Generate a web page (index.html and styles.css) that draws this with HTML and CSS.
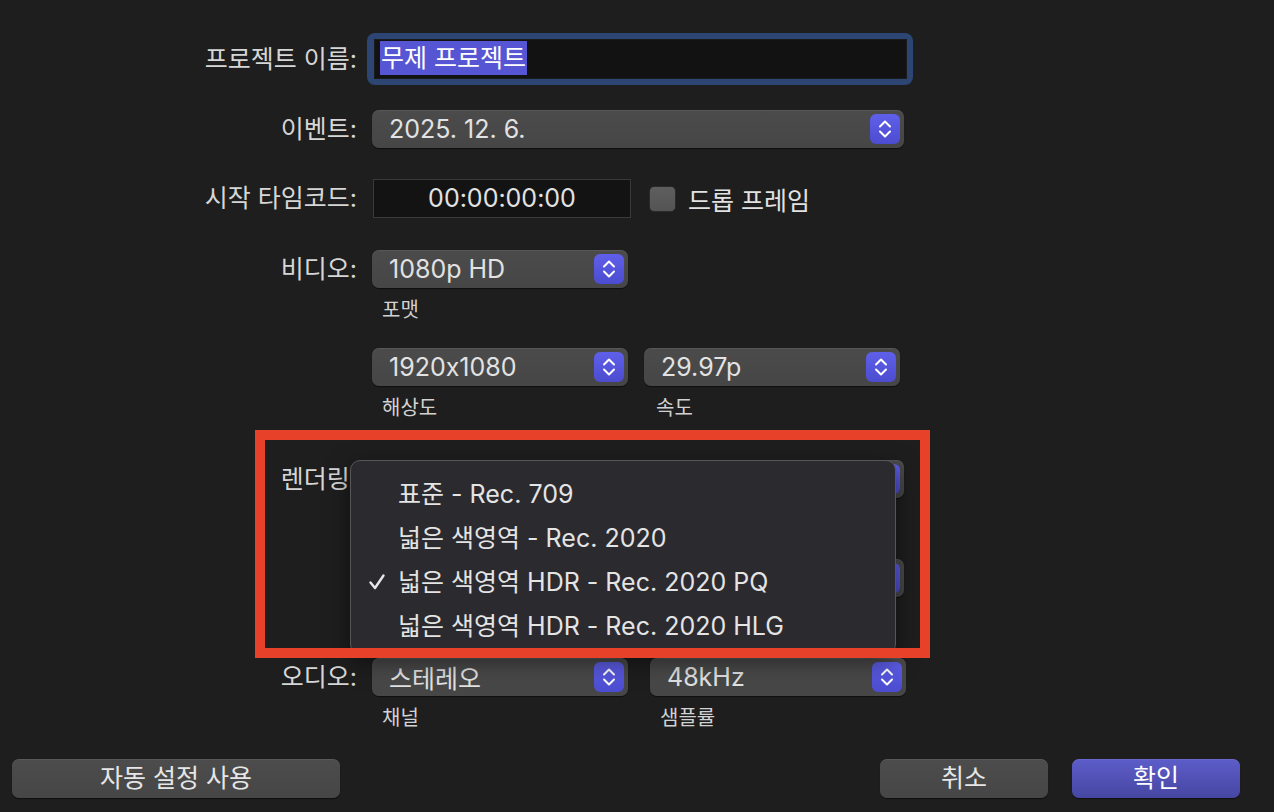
FILE: index.html
```html
<!DOCTYPE html>
<html lang="ko">
<head>
<meta charset="utf-8">
<title>새 프로젝트</title>
<link rel="stylesheet" href="styles.css">
</head>
<body>
<div class="dialog">
  <div class="row row-name">
    <div class="label">프로젝트 이름:</div>
    <div class="ring"><div class="field"><span class="sel">무제 프로젝트</span></div></div>
  </div>

  <div class="row row-event">
    <div class="label">이벤트:</div>
    <div class="popup w-wide"><span class="ptext">2025. 12. 6.</span><span class="stepper"><svg viewBox="0 0 30 30" width="30" height="30"><path d="M10 12.5 L15 7.5 L20 12.5 M10 17.5 L15 22.5 L20 17.5" fill="none" stroke="#fff" stroke-width="2" stroke-linecap="round" stroke-linejoin="round"/></svg></span></div>
  </div>

  <div class="row row-tc">
    <div class="label">시작 타임코드:</div>
    <div class="controls">
      <div class="tc">00:00:00:00</div>
      <div class="check"></div>
      <div class="checklabel">드롭 프레임</div>
    </div>
  </div>

  <div class="row row-video">
    <div class="label">비디오:</div>
    <div class="group">
      <div class="popup w-half"><span class="ptext">1080p HD</span><span class="stepper"><svg viewBox="0 0 30 30" width="30" height="30"><path d="M10 12.5 L15 7.5 L20 12.5 M10 17.5 L15 22.5 L20 17.5" fill="none" stroke="#fff" stroke-width="2" stroke-linecap="round" stroke-linejoin="round"/></svg></span></div>
      <div class="sub">포맷</div>
    </div>
  </div>

  <div class="row row-res">
    <div class="label"></div>
    <div class="pair">
      <div class="group">
        <div class="popup w-half"><span class="ptext">1920x1080</span><span class="stepper"><svg viewBox="0 0 30 30" width="30" height="30"><path d="M10 12.5 L15 7.5 L20 12.5 M10 17.5 L15 22.5 L20 17.5" fill="none" stroke="#fff" stroke-width="2" stroke-linecap="round" stroke-linejoin="round"/></svg></span></div>
        <div class="sub">해상도</div>
      </div>
      <div class="group">
        <div class="popup w-half"><span class="ptext">29.97p</span><span class="stepper"><svg viewBox="0 0 30 30" width="30" height="30"><path d="M10 12.5 L15 7.5 L20 12.5 M10 17.5 L15 22.5 L20 17.5" fill="none" stroke="#fff" stroke-width="2" stroke-linecap="round" stroke-linejoin="round"/></svg></span></div>
        <div class="sub sub-speed">속도</div>
      </div>
    </div>
  </div>

  <div class="row row-render">
    <div class="label">렌더링:</div>
    <div class="group">
      <div class="popup w-wide"><span class="ptext"></span><span class="stepper"><svg viewBox="0 0 30 30" width="30" height="30"><path d="M10 12.5 L15 7.5 L20 12.5 M10 17.5 L15 22.5 L20 17.5" fill="none" stroke="#fff" stroke-width="2" stroke-linecap="round" stroke-linejoin="round"/></svg></span></div>
      <div class="sub sub-empty"></div>
    </div>
  </div>

  <div class="row row-color">
    <div class="label"></div>
    <div class="group">
      <div class="popup w-wide"><span class="ptext"></span><span class="stepper"><svg viewBox="0 0 30 30" width="30" height="30"><path d="M10 12.5 L15 7.5 L20 12.5 M10 17.5 L15 22.5 L20 17.5" fill="none" stroke="#fff" stroke-width="2" stroke-linecap="round" stroke-linejoin="round"/></svg></span></div>
      <div class="sub sub-empty"></div>
    </div>
  </div>

  <div class="row row-audio">
    <div class="label">오디오:</div>
    <div class="pair pair-audio">
      <div class="group">
        <div class="popup w-half"><span class="ptext">스테레오</span><span class="stepper"><svg viewBox="0 0 30 30" width="30" height="30"><path d="M10 12.5 L15 7.5 L20 12.5 M10 17.5 L15 22.5 L20 17.5" fill="none" stroke="#fff" stroke-width="2" stroke-linecap="round" stroke-linejoin="round"/></svg></span></div>
        <div class="sub">채널</div>
      </div>
      <div class="group">
        <div class="popup w-half"><span class="ptext">48kHz</span><span class="stepper"><svg viewBox="0 0 30 30" width="30" height="30"><path d="M10 12.5 L15 7.5 L20 12.5 M10 17.5 L15 22.5 L20 17.5" fill="none" stroke="#fff" stroke-width="2" stroke-linecap="round" stroke-linejoin="round"/></svg></span></div>
        <div class="sub">샘플률</div>
      </div>
    </div>
  </div>

  <div class="buttons">
    <div class="btn btn-auto">자동 설정 사용</div>
    <div class="btn-right">
      <div class="btn btn-cancel">취소</div>
      <div class="btn btn-ok">확인</div>
    </div>
  </div>

  <div class="menu">
    <div class="item">표준 - Rec. 709</div>
    <div class="item">넓은 색영역 - Rec. 2020</div>
    <div class="item"><svg class="tick" viewBox="0 0 18 18" width="18" height="18"><path d="M2.5 9.5 L7 15 L15.5 2.5" fill="none" stroke="#e8e8e8" stroke-width="2.4" stroke-linecap="round" stroke-linejoin="round"/></svg>넓은 색영역 HDR - Rec. 2020 PQ</div>
    <div class="item">넓은 색영역 HDR - Rec. 2020 HLG</div>
  </div>

  <div class="annot"></div>
</div>
</body>
</html>
```

FILE: styles.css
```css
* { box-sizing: border-box; }
html, body { margin: 0; padding: 0; }
body {
  width: 1274px;
  height: 812px;
  overflow: hidden;
  background: #1e1e1e;
  font-family: Inter, "Noto Sans CJK KR", "Noto Sans", sans-serif;
  font-feature-settings: "calt" 0;
  color: #dedede;
}
.dialog {
  position: relative;
  width: 1274px;
  height: 812px;
  padding-top: 33px;
  display: flex;
  flex-direction: column;
}
.row {
  display: grid;
  grid-template-columns: 357px 1fr;
  column-gap: 15px;
  align-items: start;
}
.label {
  text-align: right;
  font-size: 25px;
  line-height: 38px;
  color: #d6d6d6;
  white-space: nowrap;
}
.row-name .label { line-height: 52px; }
.row-name { height: 52px; }
.ring {
  margin-left: -5px;
  width: 546px;
  height: 52px;
  border-radius: 8px;
  background: #2c4572;
  padding: 6px 6px 6px 7px;
}
.field {
  height: 40px;
  background: #121212;
  border: 1px solid #1b1b1b;
  padding: 1px 5px;
}
.sel {
  display: inline-block;
  background: #5656d4;
  color: #fff;
  font-size: 25px;
  line-height: 34px;
  padding: 0 1px;
}
.row-event { margin-top: 25px; }
.row-tc { margin-top: 31px; }
.row-video { margin-top: 32px; }
.row-res { margin-top: 26px; }
.row-render { margin-top: 40px; }
.row-color { margin-top: 27px; }
.row-audio { margin-top: 27px; }

.popup {
  height: 38px;
  border-radius: 7px;
  background: linear-gradient(#4b4b4b, #464646);
  box-shadow: 0 1px 1px rgba(0,0,0,0.55), inset 0 1px 0 rgba(255,255,255,0.07);
  display: flex;
  align-items: center;
  justify-content: space-between;
  padding: 0 4px 0 17px;
}
.w-wide { width: 532px; }
.w-half { width: 256px; }
.ptext {
  font-size: 25px;
  color: #e2e2e2;
  white-space: nowrap;
}
.stepper {
  width: 30px;
  height: 30px;
  border-radius: 6px;
  background: linear-gradient(#5f5fea, #4c4cd0);
  display: flex;
  flex: none;
}
.controls {
  display: flex;
  align-items: center;
  height: 39px;
}
.tc {
  width: 258px;
  height: 39px;
  margin-left: 1px;
  background: #131313;
  border: 1px solid #3a3a3a;
  text-align: center;
  font-size: 25px;
  line-height: 37px;
  color: #e2e2e2;
}
.check {
  width: 27px;
  height: 26px;
  margin-left: 18px;
  border-radius: 5px;
  background: linear-gradient(#5e5e5e, #545454);
  border: 1px solid #2a2a2a;
}
.checklabel {
  margin-left: 12px;
  font-size: 25px;
  color: #e2e2e2;
}
.group { display: flex; flex-direction: column; }
.sub {
  margin-top: 10px;
  padding-left: 10px;
  font-size: 20px;
  line-height: 24px;
  color: #d2d2d2;
}
.sub-empty { height: 24px; }
.sub-speed { padding-left: 12px; }
.pair { display: flex; gap: 16px; }
.pair-audio { gap: 22px; }

.buttons {
  margin-top: 29px;
  display: flex;
  justify-content: space-between;
  padding: 0 34px 0 12px;
}
.btn {
  height: 39px;
  border-radius: 7px;
  background: linear-gradient(#4c4c4c, #464646);
  box-shadow: 0 1px 1px rgba(0,0,0,0.55), inset 0 1px 0 rgba(255,255,255,0.07);
  font-size: 25px;
  line-height: 39px;
  text-align: center;
  color: #e6e6e6;
}
.btn-auto { width: 328px; }
.btn-right { display: flex; gap: 24px; }
.btn-cancel { width: 168px; }
.btn-ok {
  width: 168px;
  background: linear-gradient(#5d5dca, #4646a2);
  color: #fff;
}

.menu {
  position: absolute;
  left: 350px;
  top: 460px;
  width: 546px;
  height: 194px;
  padding-top: 11px;
  border-radius: 10px;
  background: #2b2a2f;
  border: 1px solid #57565b;
  box-shadow: 0 8px 24px rgba(0,0,0,0.5);
}
.item {
  position: relative;
  height: 44px;
  line-height: 44px;
  padding-left: 47px;
  font-size: 25px;
  color: #e4e4e4;
  white-space: nowrap;
}
.tick {
  position: absolute;
  left: 17px;
  top: 13px;
}
.annot {
  position: absolute;
  left: 255px;
  top: 430px;
  width: 675px;
  height: 228px;
  border: 10px solid #e8412a;
  pointer-events: none;
}
```
